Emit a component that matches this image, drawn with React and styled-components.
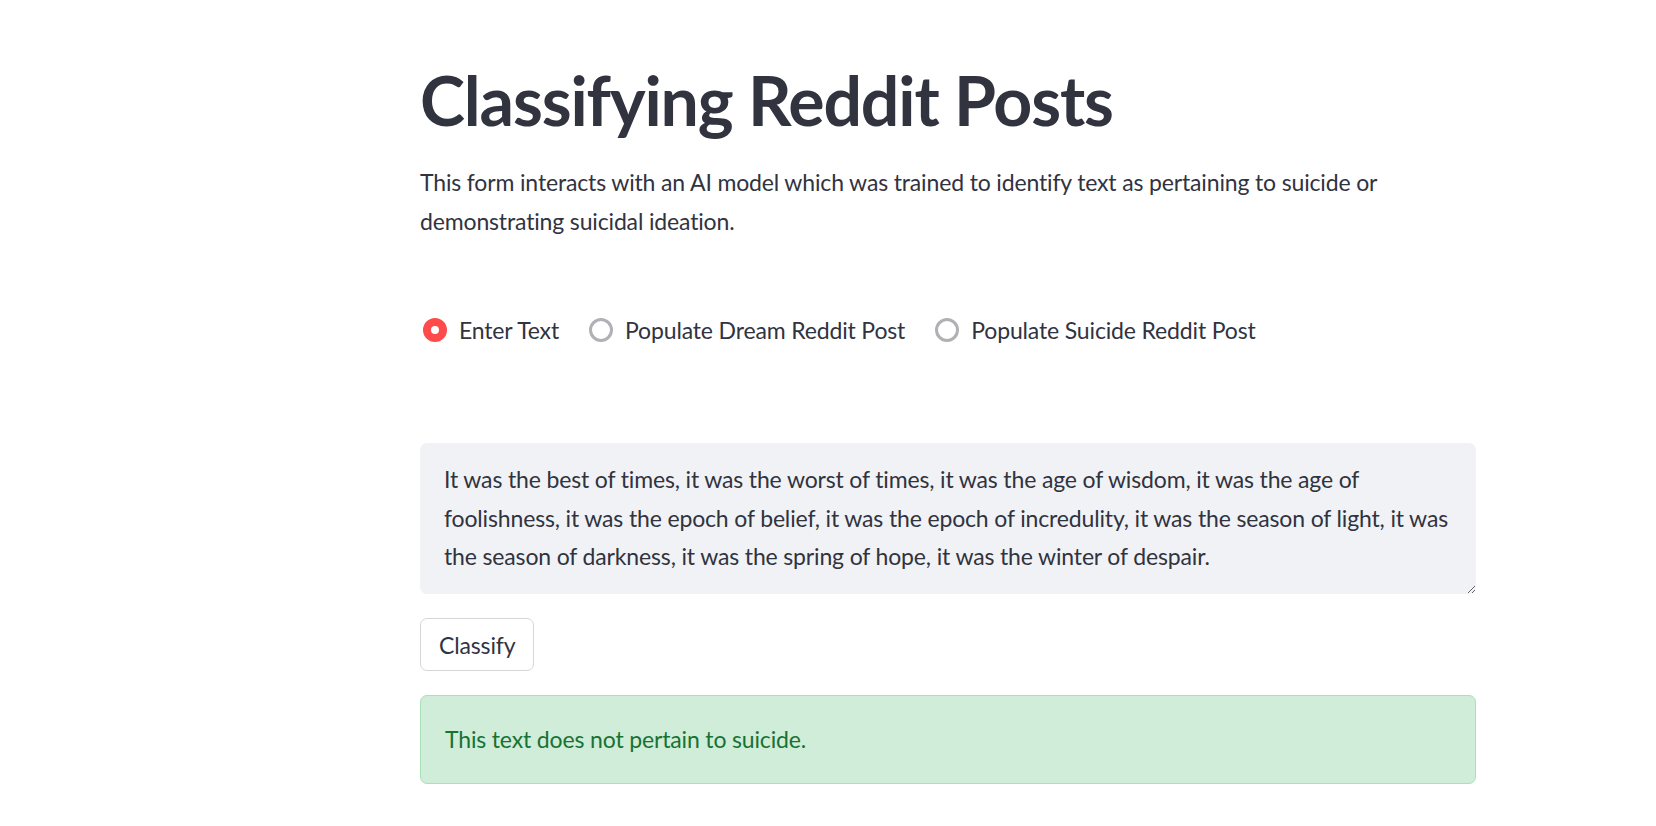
import React, { useState } from "react";
import styled, { createGlobalStyle } from "styled-components";

const GlobalStyle = createGlobalStyle`
  html, body {
    margin: 0;
    padding: 0;
    background: #ffffff;
  }
  body {
    font-family: Lato, "Noto Sans", "Liberation Sans", sans-serif;
    color: #31333f;
  }
`;

const Page = styled.main`
  display: flex;
  padding: 59px 180px 40px 420px;
`;

const Column = styled.div`
  display: flex;
  flex-direction: column;
  width: 1056px;
`;

const Title = styled.h1`
  margin: 0;
  font-size: 68px;
  line-height: 82px;
  font-weight: 700;
  color: #31333f;
  letter-spacing: -1.15px;
`;

const Lead = styled.p`
  margin: 22px 0 0;
  font-size: 23px;
  letter-spacing: -0.15px;
  line-height: 39px;
`;

const RadioGroup = styled.div`
  display: flex;
  align-items: center;
  gap: 27px;
  margin-top: 70px;
  height: 38.4px;
`;

const RadioOption = styled.label`
  display: flex;
  align-items: center;
  gap: 12px;
  padding-left: 3px;
  cursor: pointer;
  font-size: 23px;
  letter-spacing: -0.15px;
  line-height: 38.4px;
`;

const HiddenInput = styled.input`
  position: absolute;
  opacity: 0;
  width: 0;
  height: 0;
`;

const RadioCircle = styled.span`
  box-sizing: border-box;
  width: 24px;
  height: 24px;
  border-radius: 50%;
  flex: none;
  background: #ffffff;
  border: ${(p) => (p.$checked ? "8px solid #ff4b4b" : "3px solid #b1b1b5")};
`;

const TextArea = styled.textarea`
  box-sizing: border-box;
  margin-top: 94px;
  width: 100%;
  height: 151px;
  padding: 17px 24px;
  border: none;
  border-radius: 7px;
  background: #f0f2f6;
  color: #31333f;
  font-family: inherit;
  font-size: 23px;
  letter-spacing: -0.15px;
  line-height: 38.4px;
  resize: vertical;
  outline: none;
`;

const Button = styled.button`
  align-self: flex-start;
  margin-top: 24px;
  height: 53px;
  padding: 0 18px;
  border: 1px solid #d6d6d9;
  border-radius: 7px;
  background: #ffffff;
  color: #31333f;
  font-family: inherit;
  font-size: 23px;
  letter-spacing: -0.15px;
  cursor: pointer;
`;

const Alert = styled.div`
  box-sizing: border-box;
  margin-top: 24px;
  padding: 24px 24px;
  border: 1px solid #a9e1b9;
  border-radius: 7px;
  background: #cfedd8;
  color: #177233;
  font-size: 23px;
  letter-spacing: -0.15px;
  line-height: 38.4px;
`;

const options = [
  "Enter Text",
  "Populate Dream Reddit Post",
  "Populate Suicide Reddit Post",
];

const sample =
  "It was the best of times, it was the worst of times, it was the age of wisdom, it was the age of foolishness, it was the epoch of belief, it was the epoch of incredulity, it was the season of light, it was the season of darkness, it was the spring of hope, it was the winter of despair.";

export default function App() {
  const [choice, setChoice] = useState(0);

  return (
    <>
      <GlobalStyle />
      <Page>
        <Column>
          <Title>Classifying Reddit Posts</Title>
          <Lead>
            This form interacts with an AI model which was trained to identify
            text as pertaining to suicide or demonstrating suicidal ideation.
          </Lead>
          <RadioGroup role="radiogroup">
            {options.map((label, i) => (
              <RadioOption key={label}>
                <HiddenInput
                  type="radio"
                  name="source"
                  checked={choice === i}
                  onChange={() => setChoice(i)}
                />
                <RadioCircle $checked={choice === i} />
                {label}
              </RadioOption>
            ))}
          </RadioGroup>
          <TextArea defaultValue={sample} />
          <Button>Classify</Button>
          <Alert>This text does not pertain to suicide.</Alert>
        </Column>
      </Page>
    </>
  );
}
